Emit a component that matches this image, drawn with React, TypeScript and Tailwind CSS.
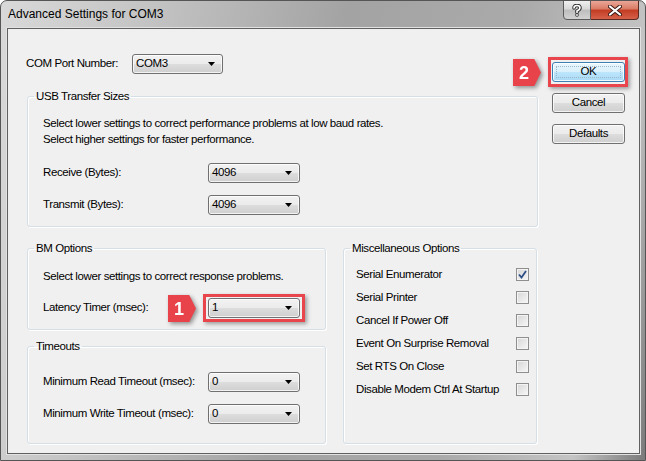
import React from 'react';

// dialog text: narrow sans at a classic 8pt size
const dlg = "font-['Liberation_Sans',Arial,sans-serif] text-[11.5px] tracking-[-0.4px] text-black";

function Arrow() {
  return (
    <svg width="7" height="4" viewBox="0 0 7 4">
      <polygon points="0,0 7,0 3.5,4" fill="#000" />
    </svg>
  );
}

function Combo({ value, width }: { value: string; width: string }) {
  return (
    <div
      className={`flex h-[20px] ${width} items-center justify-between rounded-[3px] border border-[#707070] bg-[linear-gradient(#f2f2f2_0%,#ebebeb_50%,#dddddd_50%,#cfcfcf_100%)] pl-[3px] pr-[7px] shadow-[inset_0_0_0_1px_rgba(255,255,255,0.75)]`}
    >
      <span>{value}</span>
      <Arrow />
    </div>
  );
}

function Button({ label }: { label: string }) {
  return (
    <div className="flex h-[20px] w-[73px] items-center justify-center rounded-[3px] border border-[#707070] bg-[linear-gradient(#f2f2f2_0%,#ebebeb_50%,#dddddd_50%,#cfcfcf_100%)] shadow-[inset_0_0_0_1px_rgba(255,255,255,0.75)]">
      {label}
    </div>
  );
}

// group box: legend sits on the top border, body gets its own padding
function Group({
  title,
  className,
  body,
  children,
}: {
  title: string;
  className: string;
  body: string;
  children: React.ReactNode;
}) {
  return (
    <fieldset className={`rounded-[3px] border border-[#d5dfe5] shadow-[inset_1px_1px_0_#fff,1px_1px_0_#fff] ${className}`}>
      <legend className="ml-[6px] px-[2px] leading-[14px]">{title}</legend>
      <div className={body}>{children}</div>
    </fieldset>
  );
}

// red numbered step marker pointing right
function Badge({ n, className }: { n: string; className: string }) {
  return (
    <div className={`absolute h-[27px] w-[28px] [filter:drop-shadow(2px_2px_2px_rgba(0,0,0,0.4))] ${className}`}>
      <div className="flex h-full w-full items-center pl-[6px] bg-[#e8424a] [clip-path:polygon(0_0,76%_0,100%_50%,76%_100%,0_100%)]">
        <span className="font-['Liberation_Sans',Arial,sans-serif] text-[18px] font-bold leading-none tracking-normal text-white">{n}</span>
      </div>
    </div>
  );
}

function Check({ checked }: { checked?: boolean }) {
  return (
    <div className="flex h-[13px] w-[13px] items-center justify-center border border-[#8f8f8f] bg-[linear-gradient(135deg,#d6d6d6,#f7f7f7)] shadow-[inset_0_0_0_1px_#f4f4f4]">
      {checked && (
        <svg width="9" height="9" viewBox="0 0 9 9">
          <path d="M1 4.5 L3.5 7.5 L8 1" stroke="#2d4f86" strokeWidth="1.8" fill="none" />
        </svg>
      )}
    </div>
  );
}

const misc = [
  { label: 'Serial Enumerator', checked: true },
  { label: 'Serial Printer' },
  { label: 'Cancel If Power Off' },
  { label: 'Event On Surprise Removal' },
  { label: 'Set RTS On Close' },
  { label: 'Disable Modem Ctrl At Startup' },
];

export default function App() {
  return (
    <div className="h-[461px] w-[646px] bg-white">
      <div className="flex h-[461px] w-[646px] flex-col overflow-hidden rounded-t-[7px] border border-[#555] bg-[linear-gradient(100deg,#d9d9d9_0%,#c2c2c2_22%,#a3a3a3_48%,#aaaaaa_72%,#c4c4c4_90%,#7a7a7a_100%)]">
        {/* title bar */}
        <div className="flex h-[27px] shrink-0 items-start">
          <div className="pl-[7px] pt-[6px] font-['Liberation_Sans',Arial,sans-serif] text-[12px] leading-[15px] text-black">
            Advanced Settings for COM3
          </div>
          <div className="ml-auto mr-[6px] flex -mt-px">
            <div className="flex h-[20px] w-[28px] items-center justify-center rounded-bl-[4px] border border-[#5a5a5a] bg-[linear-gradient(#f0f0f0_0%,#d8d8d8_45%,#bdbdbd_50%,#d2d2d2_100%)]">
              <svg width="10" height="13" viewBox="0 0 10 13">
                <path d="M2 4 Q2 1.5 5 1.5 Q8 1.5 8 4 Q8 5.5 5 7 L5 8.5" stroke="#333" strokeWidth="3.6" fill="none" strokeLinecap="round" />
                <circle cx="5" cy="11" r="1.8" fill="#333" />
                <path d="M2 4 Q2 1.5 5 1.5 Q8 1.5 8 4 Q8 5.5 5 7 L5 8.5" stroke="#fff" strokeWidth="1.6" fill="none" strokeLinecap="round" />
                <circle cx="5" cy="11" r="0.9" fill="#fff" />
              </svg>
            </div>
            <div className="flex h-[20px] w-[48px] items-center justify-center rounded-br-[4px] border border-l-0 border-[#5a2a22] bg-[linear-gradient(#eaa698_0%,#d97a64_45%,#c23c22_50%,#d6604a_100%)]">
              <svg width="14" height="11" viewBox="0 0 14 11">
                <path d="M2 1.5 L12 9.5 M12 1.5 L2 9.5" stroke="#3a1a14" strokeWidth="4" strokeLinecap="round" />
                <path d="M2 1.5 L12 9.5 M12 1.5 L2 9.5" stroke="#fff" strokeWidth="2.2" strokeLinecap="round" />
              </svg>
            </div>
          </div>
        </div>

        {/* client area */}
        <div className={`ml-[6px] flex h-[426px] w-[633px] flex-col border border-[#606060] bg-[#f0f0f0] pl-[18px] shadow-[0_0_0_1px_#e2e2e2] ${dlg}`}>
          <div className="flex">
            <div className="flex w-[512px] flex-col pt-[25px]">
              <div className="flex h-[20px] items-center">
                <span className="w-[106px]">COM Port Number:</span>
                <Combo value="COM3" width="w-[91px]" />
              </div>
              <Group title="USB Transfer Sizes" className="ml-[1px] mt-[15px] w-[511px]" body="pb-[11px] pl-[15px]">
                <p className="mt-[12px] leading-[16px]">
                  Select lower settings to correct performance problems at low baud rates.
                </p>
                <p className="leading-[16px]">Select higher settings for faster performance.</p>
                <div className="mt-[16px] flex items-center">
                  <span className="w-[165px]">Receive (Bytes):</span>
                  <Combo value="4096" width="w-[92px]" />
                </div>
                <div className="mt-[12px] flex items-center">
                  <span className="w-[165px]">Transmit (Bytes):</span>
                  <Combo value="4096" width="w-[92px]" />
                </div>
              </Group>
            </div>

            <div className="ml-[14px] flex w-[73px] flex-col pt-[33px]">
              <div className="relative">
                <div className="relative flex h-[20px] w-[73px] items-center justify-center rounded-[3px] border border-[#3c7fb1] bg-[linear-gradient(#eaf6fd_0%,#d9f0fc_50%,#bee6fd_50%,#a7d9f5_100%)] shadow-[inset_0_0_0_1px_rgba(255,255,255,0.8)]">
                  <div className="absolute inset-[3px] border border-dotted border-[#9cb8c9]" />
                  <span className="relative">OK</span>
                </div>
                <div className="absolute -bottom-[5px] -left-[4px] -right-[3px] -top-[5px] border-[3px] border-[#e8454c] shadow-[2px_2px_4px_rgba(0,0,0,0.35)]" />
                <Badge n="2" className="-left-[39px] -top-[3px]" />
              </div>
              <div className="mt-[11px]">
                <Button label="Cancel" />
              </div>
              <div className="mt-[11px]">
                <Button label="Defaults" />
              </div>
            </div>
          </div>

          <div className="ml-[1px] mt-[14px] flex items-stretch">
            <div className="flex w-[299px] flex-col">
              <Group title="BM Options" className="" body="pb-[11px] pl-[15px]">
                <p className="mt-[13px] leading-[16px]">Select lower settings to correct response problems.</p>
                <div className="mt-[14px] flex items-center">
                  <span className="w-[165px]">Latency Timer (msec):</span>
                  <div className="relative">
                    <Combo value="1" width="w-[92px]" />
                    <div className="absolute -bottom-[4px] -left-[5px] -right-[5px] -top-[4px] border-[3px] border-[#e8454c] shadow-[2px_2px_4px_rgba(0,0,0,0.35)]" />
                    <Badge n="1" className="-left-[40px] -top-[3px]" />
                  </div>
                </div>
              </Group>

              <Group title="Timeouts" className="mt-[9px] flex-1" body="pb-[19px] pl-[15px]">
                <div className="mt-[19px] flex items-center">
                  <span className="w-[165px]">Minimum Read Timeout (msec):</span>
                  <Combo value="0" width="w-[92px]" />
                </div>
                <div className="mt-[12px] flex items-center">
                  <span className="w-[165px]">Minimum Write Timeout (msec):</span>
                  <Combo value="0" width="w-[92px]" />
                </div>
              </Group>
            </div>

            <Group title="Miscellaneous Options" className="ml-[17px] w-[194px]" body="flex flex-col pl-[12px] pr-[7px] pt-[8px]">
              {misc.map((m) => (
                <div key={m.label} className="flex h-[23px] items-center justify-between">
                  <span>{m.label}</span>
                  <Check checked={m.checked} />
                </div>
              ))}
            </Group>
          </div>
        </div>
      </div>
    </div>
  );
}
